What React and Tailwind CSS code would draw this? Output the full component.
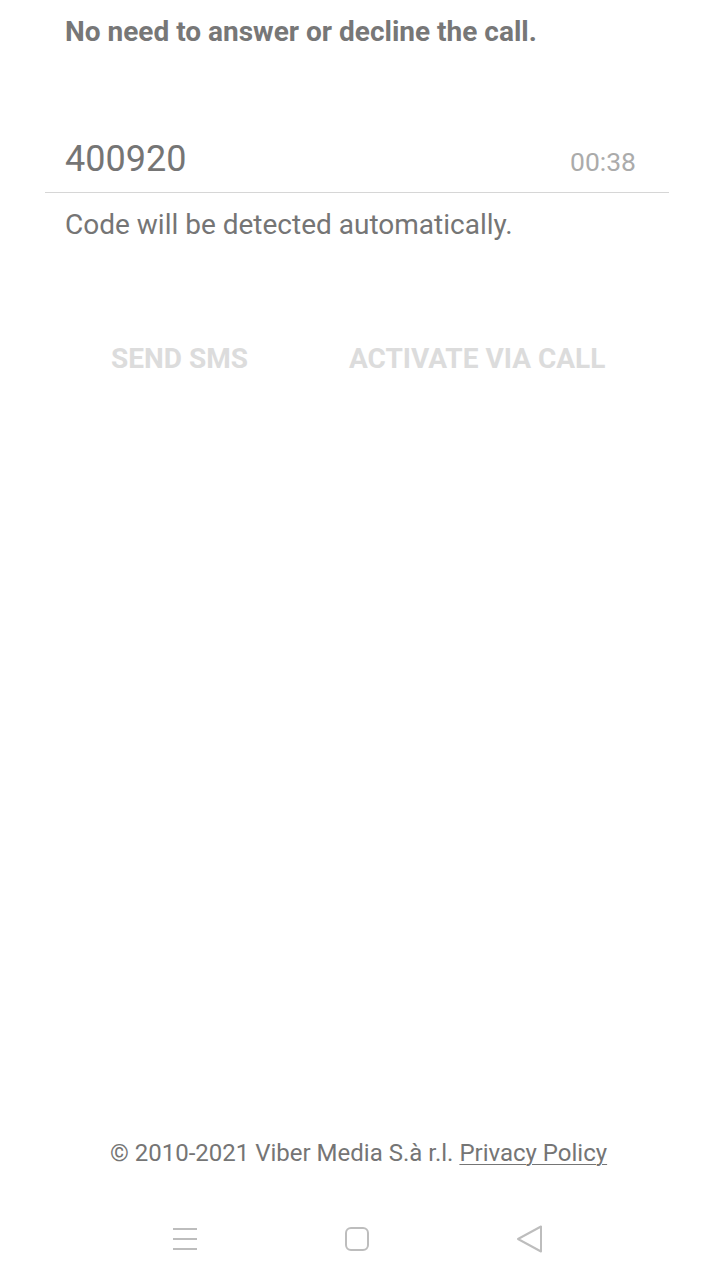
export default function App() {
  return (
    <div className="flex h-[1283px] w-full flex-col bg-white font-['Roboto',sans-serif]">
      <p className="px-[65px] pt-[14px] text-[28px] font-bold leading-[36px] text-[#777777]">
        No need to answer or decline the call.
      </p>

      <div className="ml-[45px] mr-[48px] mt-[87px] flex items-baseline justify-between border-b border-[#d6d6d6] pb-[8px] pl-[20px] pr-[33px]">
        <span className="text-[36px] leading-[44px] text-[#757575]">400920</span>
        <span className="text-[26.5px] leading-[44px] text-[#ababab]">00:38</span>
      </div>

      <p className="mt-[14px] px-[65px] text-[28px] leading-[36px] text-[#757575]">
        Code will be detected automatically.
      </p>

      <div className="mt-[98px] flex gap-[101px] pl-[111px] text-[28px] font-bold leading-[36px] text-[#dcdcdc]">
        <button className="uppercase">Send SMS</button>
        <button className="uppercase">Activate via call</button>
      </div>

      <div className="mt-auto text-center text-[24px] leading-[32px] text-[#757575]">
        © 2010-2021 Viber Media S.à r.l.{" "}
        <a className="underline decoration-1 underline-offset-[3px]">Privacy Policy</a>
      </div>

      <nav className="mt-[26px] flex h-[88px] items-center gap-[148px] pl-[173px]">
        <svg width="24" height="24" viewBox="0 0 24 24" fill="none" stroke="#bdbdbd" strokeWidth="2">
          <path d="M0 2h24M0 12h24M0 22h24" />
        </svg>
        <svg width="24" height="24" viewBox="0 0 24 24" fill="none" stroke="#bdbdbd" strokeWidth="2">
          <rect x="1" y="1" width="22" height="22" rx="5" />
        </svg>
        <svg width="26" height="28" viewBox="0 0 26 28" fill="none" stroke="#bdbdbd" strokeWidth="2" strokeLinejoin="round">
          <path d="M1 14L24 1.5v25z" />
        </svg>
      </nav>
    </div>
  );
}
